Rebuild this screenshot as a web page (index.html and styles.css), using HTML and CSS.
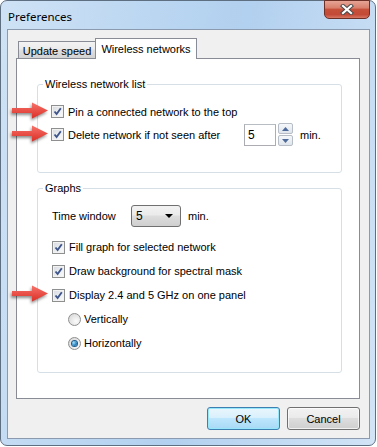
FILE: index.html
```html
<!DOCTYPE html>
<html lang="en">
<head>
  <meta charset="UTF-8">
  <meta name="viewport" content="width=device-width, initial-scale=1.0">
  <title>Preferences</title>
  <link rel="stylesheet" href="styles.css">
</head>
<body>
  <div class="window">
    <div class="titlebar">
      <span class="title">Preferences</span>
      <div class="close-btn">
        <svg width="14" height="11" viewBox="0 0 14 11">
          <path d="M3 2 L11 9 M11 2 L3 9" stroke="#4b4b4b" stroke-width="4.2" stroke-linecap="square"/>
          <path d="M3 2 L11 9 M11 2 L3 9" stroke="#fff" stroke-width="2.2" stroke-linecap="square"/>
        </svg>
      </div>
    </div>

    <div class="client">
      <div class="tabs">
        <div class="tab">Update speed</div>
        <div class="tab active">Wireless networks</div>
      </div>

      <div class="tab-pane">
        <fieldset class="group">
          <legend>Wireless network list</legend>
          <div class="group-body first">
            <div class="row">
              <span class="checkbox"><svg width="11" height="11" viewBox="0 0 11 11"><path d="M2.5 5.5 L4.6 8 L8.8 2.3" fill="none" stroke="#3e558c" stroke-width="1.9"/></svg></span>
              <span class="label">Pin a connected network to the top</span>
            </div>
            <div class="row">
              <span class="checkbox"><svg width="11" height="11" viewBox="0 0 11 11"><path d="M2.5 5.5 L4.6 8 L8.8 2.3" fill="none" stroke="#3e558c" stroke-width="1.9"/></svg></span>
              <span class="label label-delete">Delete network if not seen after</span>
              <span class="spin-input">5</span>
              <span class="spin-buttons">
                <span class="spin-btn"><svg width="7" height="4" viewBox="0 0 7 4"><path d="M0 4 L3.5 0 L7 4 Z" fill="#4d6a9a"/></svg></span>
                <span class="spin-btn"><svg width="7" height="4" viewBox="0 0 7 4"><path d="M0 0 L3.5 4 L7 0 Z" fill="#4d6a9a"/></svg></span>
              </span>
              <span class="unit">min.</span>
            </div>
          </div>
        </fieldset>

        <fieldset class="group graphs">
          <legend>Graphs</legend>
          <div class="group-body">
            <div class="row row-tall">
              <span class="label label-time">Time window</span>
              <span class="select">
                <span>5</span>
                <svg width="8" height="4" viewBox="0 0 8 4"><path d="M0 0 L8 0 L4 4 Z" fill="#000"/></svg>
              </span>
              <span class="unit">min.</span>
            </div>
            <div class="checks">
              <div class="row row-tall">
                <span class="checkbox"><svg width="11" height="11" viewBox="0 0 11 11"><path d="M2.5 5.5 L4.6 8 L8.8 2.3" fill="none" stroke="#3e558c" stroke-width="1.9"/></svg></span>
                <span class="label">Fill graph for selected network</span>
              </div>
              <div class="row row-tall">
                <span class="checkbox"><svg width="11" height="11" viewBox="0 0 11 11"><path d="M2.5 5.5 L4.6 8 L8.8 2.3" fill="none" stroke="#3e558c" stroke-width="1.9"/></svg></span>
                <span class="label">Draw background for spectral mask</span>
              </div>
              <div class="row row-tall">
                <span class="checkbox"><svg width="11" height="11" viewBox="0 0 11 11"><path d="M2.5 5.5 L4.6 8 L8.8 2.3" fill="none" stroke="#3e558c" stroke-width="1.9"/></svg></span>
                <span class="label">Display 2.4 and 5 GHz on one panel</span>
              </div>
              <div class="row row-tall indent">
                <span class="radio"></span>
                <span class="label">Vertically</span>
              </div>
              <div class="row row-tall indent">
                <span class="radio checked"></span>
                <span class="label">Horizontally</span>
              </div>
            </div>
          </div>
        </fieldset>
      </div>

      <div class="buttons">
        <div class="btn btn-default">OK</div>
        <div class="btn">Cancel</div>
      </div>
    </div>

    <!-- red pointer arrows drawn over the dialog -->
    <svg class="arrow arrow-1" width="42" height="22" viewBox="0 0 42 22"><path d="M4 8 H24 V2.5 L40 10.5 L24 18.5 V13 H4 Z" fill="url(#red)"/><defs><linearGradient id="red" x1="0" y1="0" x2="0" y2="1"><stop offset="0" stop-color="#f5736a"/><stop offset="1" stop-color="#dc2e26"/></linearGradient></defs></svg>
    <svg class="arrow arrow-2" width="42" height="22" viewBox="0 0 42 22"><path d="M4 8 H24 V2.5 L40 10.5 L24 18.5 V13 H4 Z" fill="url(#red)"/></svg>
    <svg class="arrow arrow-3" width="42" height="22" viewBox="0 0 42 22"><path d="M4 8 H24 V2.5 L40 10.5 L24 18.5 V13 H4 Z" fill="url(#red)"/></svg>
  </div>
</body>
</html>
```

FILE: styles.css
```css
* {
  box-sizing: border-box;
}

body {
  margin: 0;
  background-color: #fff;
  font-family: 'Liberation Sans', Arial, sans-serif;
  font-size: 11px;
  color: #000;
}

.window {
  position: relative;
  width: 376px;
  height: 446px;
  border: 1px solid #5f6f82;
  border-radius: 7px;
  padding: 0 5px 6px 6px;
  display: flex;
  flex-direction: column;
  background: linear-gradient(100deg, #cfe2f5 0%, #bad6f1 35%, #b2d0ef 55%, #c3dbf3 80%, #d2e4f6 100%);
}

.titlebar {
  height: 28px;
  display: flex;
  justify-content: space-between;
}

.title {
  align-self: center;
  padding-left: 1px;
  margin-top: 2px;
  font-family: 'Noto Sans', sans-serif;
  font-size: 11.5px;
}

.close-btn {
  width: 46px;
  height: 19px;
  margin-top: -1px;
  border: 1px solid #6d3027;
  border-radius: 0 0 5px 5px;
  background: linear-gradient(#e6a595 0%, #d9806e 40%, #c6503a 50%, #c24a36 80%, #d77763 100%);
  display: flex;
  align-items: center;
  justify-content: center;
}

.client {
  flex: 1;
  border: 1px solid #8b9aae;
  background-color: #f0f0f0;
  padding: 8px 9px 8px 8px;
  display: flex;
  flex-direction: column;
}

.tabs {
  height: 21px;
  margin-bottom: -1px;
  padding-left: 2px;
  display: flex;
  align-items: flex-end;
  position: relative;
  z-index: 1;
}

.tab {
  width: 78px;
  height: 17px;
  margin-bottom: 1px;
  border: 1px solid #898c95;
  border-bottom: none;
  padding-top: 2px;
  line-height: 14px;
  text-align: center;
  background: linear-gradient(#f3f3f3 0%, #ebebeb 45%, #dedede 50%, #d2d2d2 100%);
}

.tab.active {
  width: 102px;
  height: 21px;
  margin-bottom: 0;
  margin-left: -1px;
  padding-top: 3px;
  background: #fff;
}

.tab-pane {
  flex: 1;
  border: 1px solid #898c95;
  background-color: #fff;
  padding: 19px 17px 0 20px;
}

.group {
  margin: 0;
  padding: 0 0 26px;
  border: 1px solid #d5dfe5;
  border-radius: 3px;
  min-width: 0;
}

.group legend {
  margin-left: 5px;
  padding: 0 2px;
  line-height: 13px;
}

.group.graphs {
  margin-top: 9px;
  padding-bottom: 17px;
}

.group-body {
  padding: 9px 0 0 14px;
}

.group-body.first {
  padding-left: 13px;
}

.row {
  height: 23px;
  display: flex;
  align-items: center;
}

.row-tall {
  height: 24px;
}

.checks {
  margin-top: 7px;
}

.indent {
  padding-left: 16px;
}

.checkbox {
  width: 13px;
  height: 13px;
  flex: none;
  border: 1px solid #8e8f8f;
  background: linear-gradient(135deg, #d6d9de 0%, #eef0f2 60%, #fafafa 100%);
  box-shadow: inset 0 0 0 1px #f2f2f2;
  display: flex;
  align-items: center;
  justify-content: center;
  margin-right: 4px;
}

.radio {
  width: 13px;
  height: 13px;
  flex: none;
  border: 1px solid #8e8f8f;
  border-radius: 50%;
  background: radial-gradient(circle at 65% 65%, #fbfbfb 0%, #e3e3e3 60%, #cfcfcf 100%);
  margin-right: 3px;
  display: flex;
  align-items: center;
  justify-content: center;
}

.radio.checked::after {
  content: '';
  width: 5px;
  height: 5px;
  border-radius: 50%;
  background: radial-gradient(circle at 35% 35%, #a6e0fa 0%, #2a86c4 55%, #0d4f86 100%);
  box-shadow: 0 0 0 1px #1b5b8c;
}

.label {
  white-space: nowrap;
}

.label-delete {
  width: 176px;
}

.label-time {
  width: 79px;
}

.spin-input {
  width: 32px;
  height: 22px;
  border: 1px solid #abadb3;
  border-top-color: #b8bcc3;
  padding: 3px 0 0 3px;
  line-height: 14px;
  font-size: 12px;
}

.spin-buttons {
  margin-left: 2px;
  display: flex;
  flex-direction: column;
  gap: 1px;
}

.spin-btn {
  width: 15px;
  height: 11px;
  border: 1px solid #b6bdc6;
  border-radius: 2px;
  background: linear-gradient(#f6f8fa, #dfe5ec);
  display: flex;
  align-items: center;
  justify-content: center;
}

.unit {
  margin-left: 7px;
}

.select {
  width: 50px;
  height: 22px;
  border: 1px solid #707070;
  border-radius: 3px;
  padding: 0 7px 0 4px;
  display: flex;
  align-items: center;
  justify-content: space-between;
  font-size: 12px;
  background: linear-gradient(#f2f2f2 0%, #ebebeb 45%, #dddddd 50%, #cfcfcf 100%);
}

.buttons {
  margin-top: 8px;
  display: flex;
  justify-content: flex-end;
  gap: 7px;
}

.btn {
  width: 73px;
  height: 23px;
  border: 1px solid #707070;
  border-radius: 3px;
  display: flex;
  align-items: center;
  justify-content: center;
  background: linear-gradient(#f2f2f2 0%, #ebebeb 45%, #dddddd 50%, #cfcfcf 100%);
  box-shadow: inset 0 0 0 1px rgba(255, 255, 255, 0.7);
}

.btn-default {
  border-color: #3c7fb1;
  background: linear-gradient(#eaf6fd 0%, #d9f0fc 45%, #bee6fd 50%, #a7d9f5 100%);
  box-shadow: inset 0 0 0 1px #97e7fa;
}

.arrow {
  position: absolute;
  left: 7px;
  filter: drop-shadow(-1px 2px 1.5px rgba(0, 0, 0, 0.45));
}

.arrow-1 {
  top: 99px;
}

.arrow-2 {
  top: 122px;
}

.arrow-3 {
  top: 282px;
}
```
